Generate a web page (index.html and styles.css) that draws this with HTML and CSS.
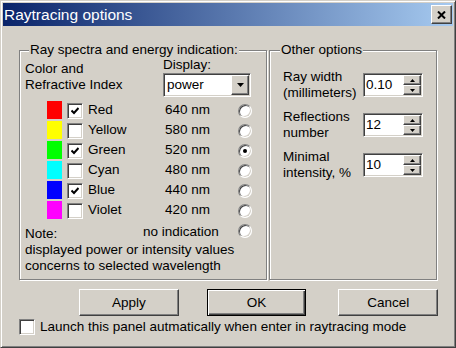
FILE: index.html
```html
<!DOCTYPE html>
<html lang="en">

<head>
    <meta charset="UTF-8">
    <title>Raytracing options</title>
    <link rel="stylesheet" href="styles.css">
</head>

<body>
    <div class="window">
        <div class="titlebar">
            <span class="title">Raytracing options</span>
            <button class="close raised">
                <svg width="9" height="8" viewBox="0 0 9 8"><path d="M1 0.5 L8 7.5 M8 0.5 L1 7.5" stroke="#000" stroke-width="2" fill="none"/></svg>
            </button>
        </div>

        <div class="content">
            <div class="groups">
                <!-- Spectra group -->
                <div class="group spectra">
                    <span class="legend">Ray spectra and energy indication:</span>
                    <div class="head">
                        <div class="head-label">Color and<br>Refractive Index</div>
                        <div class="display">
                            <div>Display:</div>
                            <div class="combo sunken">
                                <span class="combo-value">power</span>
                                <span class="combo-btn raised">
                                    <svg width="7" height="4" viewBox="0 0 7 4"><path d="M0 0 H7 L3.5 4 Z" fill="#000"/></svg>
                                </span>
                            </div>
                        </div>
                    </div>

                    <div class="rows">
                        <div class="row">
                            <span class="swatch red"></span>
                            <span class="check sunken"><svg width="8" height="8" viewBox="0 0 8 8"><path d="M0.5 3.5 L3 6 L7.5 1" stroke="#000" stroke-width="2" fill="none"/></svg></span>
                            <span class="name">Red</span>
                            <span class="wl">640 nm</span>
                            <span class="radio"></span>
                        </div>
                        <div class="row">
                            <span class="swatch yellow"></span>
                            <span class="check sunken"></span>
                            <span class="name">Yellow</span>
                            <span class="wl">580 nm</span>
                            <span class="radio"></span>
                        </div>
                        <div class="row">
                            <span class="swatch green"></span>
                            <span class="check sunken"><svg width="8" height="8" viewBox="0 0 8 8"><path d="M0.5 3.5 L3 6 L7.5 1" stroke="#000" stroke-width="2" fill="none"/></svg></span>
                            <span class="name">Green</span>
                            <span class="wl">520 nm</span>
                            <span class="radio selected"></span>
                        </div>
                        <div class="row">
                            <span class="swatch cyan"></span>
                            <span class="check sunken"></span>
                            <span class="name">Cyan</span>
                            <span class="wl">480 nm</span>
                            <span class="radio"></span>
                        </div>
                        <div class="row">
                            <span class="swatch blue"></span>
                            <span class="check sunken"><svg width="8" height="8" viewBox="0 0 8 8"><path d="M0.5 3.5 L3 6 L7.5 1" stroke="#000" stroke-width="2" fill="none"/></svg></span>
                            <span class="name">Blue</span>
                            <span class="wl">440 nm</span>
                            <span class="radio"></span>
                        </div>
                        <div class="row">
                            <span class="swatch violet"></span>
                            <span class="check sunken"></span>
                            <span class="name">Violet</span>
                            <span class="wl">420 nm</span>
                            <span class="radio"></span>
                        </div>
                        <div class="row last">
                            <span class="note-label">Note:</span>
                            <span class="none">no indication</span>
                            <span class="radio"></span>
                        </div>
                    </div>
                    <p class="note">displayed power or intensity values<br>concerns to selected wavelength</p>
                </div>

                <!-- Other options group -->
                <div class="group other">
                    <span class="legend">Other options</span>
                    <div class="field">
                        <div class="field-label">Ray width<br>(millimeters)</div>
                        <div class="spin sunken">
                            <span class="spin-value">0.10</span>
                            <span class="spin-btns">
                                <span class="spin-btn raised"><svg width="5" height="3" viewBox="0 0 5 3"><path d="M0 3 H5 L2.5 0 Z" fill="#000"/></svg></span>
                                <span class="spin-btn raised"><svg width="5" height="3" viewBox="0 0 5 3"><path d="M0 0 H5 L2.5 3 Z" fill="#000"/></svg></span>
                            </span>
                        </div>
                    </div>
                    <div class="field">
                        <div class="field-label">Reflections<br>number</div>
                        <div class="spin sunken">
                            <span class="spin-value">12</span>
                            <span class="spin-btns">
                                <span class="spin-btn raised"><svg width="5" height="3" viewBox="0 0 5 3"><path d="M0 3 H5 L2.5 0 Z" fill="#000"/></svg></span>
                                <span class="spin-btn raised"><svg width="5" height="3" viewBox="0 0 5 3"><path d="M0 0 H5 L2.5 3 Z" fill="#000"/></svg></span>
                            </span>
                        </div>
                    </div>
                    <div class="field">
                        <div class="field-label">Minimal<br>intensity, %</div>
                        <div class="spin sunken">
                            <span class="spin-value">10</span>
                            <span class="spin-btns">
                                <span class="spin-btn raised"><svg width="5" height="3" viewBox="0 0 5 3"><path d="M0 3 H5 L2.5 0 Z" fill="#000"/></svg></span>
                                <span class="spin-btn raised"><svg width="5" height="3" viewBox="0 0 5 3"><path d="M0 0 H5 L2.5 3 Z" fill="#000"/></svg></span>
                            </span>
                        </div>
                    </div>
                </div>
            </div>

            <div class="buttons">
                <button class="btn raised apply">Apply</button>
                <button class="btn default ok">OK</button>
                <button class="btn raised cancel">Cancel</button>
            </div>

            <label class="launch">
                <span class="check sunken"></span>
                Launch this panel autmatically when enter in raytracing mode
            </label>
        </div>
    </div>
</body>

</html>
```

FILE: styles.css
```css
* {
    margin: 0;
    padding: 0;
    box-sizing: border-box;
}

body {
    font-family: 'Liberation Sans', Arial, sans-serif;
    font-size: 13.5px;
    line-height: 16px;
    color: #000;
    background-color: #d4d0c8;
}

button {
    font: inherit;
    color: inherit;
    cursor: pointer;
}

/* 3d borders */
.raised {
    background-color: #d4d0c8;
    border: 1px solid;
    border-color: #ffffff #404040 #404040 #ffffff;
    box-shadow: inset -1px -1px 0 #808080, inset 1px 1px 0 #d4d0c8;
}

.sunken {
    background-color: #ffffff;
    border: 1px solid;
    border-color: #808080 #ffffff #ffffff #808080;
    box-shadow: inset 1px 1px 0 #404040, inset -1px -1px 0 #d4d0c8;
}

.window {
    width: 456px;
    height: 348px;
    background-color: #d4d0c8;
    border: 1px solid;
    border-color: #d4d0c8 #404040 #404040 #d4d0c8;
    box-shadow: inset 1px 1px 0 #ffffff, inset -1px -1px 0 #808080;
    padding: 2px;
    display: flex;
    flex-direction: column;
}

.titlebar {
    height: 23px;
    background: linear-gradient(to right, #0a246a, #a6caf0);
    display: flex;
    align-items: center;
    justify-content: space-between;
    padding: 0 1px 0 1px;
}

.title {
    color: #ffffff;
    font-size: 15.5px;
}

.close {
    width: 21px;
    height: 19px;
    display: flex;
    align-items: center;
    justify-content: center;
}

.content {
    padding: 24px 15px 0 16px;
}

.groups {
    display: grid;
    grid-template-columns: 248px 168px;
    column-gap: 2px;
    height: 230px;
}

.group {
    position: relative;
    border: 1px solid #808080;
    box-shadow: inset 1px 1px 0 #ffffff, 1px 1px 0 #ffffff;
}

.legend {
    position: absolute;
    top: -9px;
    left: 9px;
    padding: 0 1px;
    background-color: #d4d0c8;
    white-space: nowrap;
}

/* spectra group */
.spectra {
    padding: 6px 0 0 5px;
}

.head {
    display: flex;
}

.head-label {
    width: 138px;
    margin-top: 4px;
}

.combo {
    width: 88px;
    height: 24px;
    padding: 1px;
    display: flex;
    align-items: center;
}

.combo-value {
    flex: 1;
    padding-left: 2px;
}

.combo-btn {
    width: 18px;
    height: 20px;
    display: flex;
    align-items: center;
    justify-content: center;
}

.rows {
    margin-top: 4px;
}

.row {
    display: flex;
    align-items: flex-start;
    height: 20px;
}

.swatch {
    width: 15px;
    height: 18px;
    margin-left: 22px;
}

.red { background-color: #ff0000; }
.yellow { background-color: #ffff00; }
.green { background-color: #00ff00; }
.cyan { background-color: #00ffff; }
.blue { background-color: #0000ff; }
.violet { background-color: #ff00ff; }

.check {
    width: 16px;
    height: 16px;
    display: flex;
    align-items: center;
    justify-content: center;
}

.row .check {
    margin: 2px 0 0 5px;
}

.name {
    width: 77px;
    margin: 1px 0 0 5px;
}

.wl {
    width: 73px;
    margin-top: 1px;
}

.radio {
    width: 14px;
    height: 14px;
    margin-top: 3px;
    border-radius: 50%;
    background-color: #ffffff;
    border: 1px solid;
    border-color: #808080 #ffffff #ffffff #808080;
    box-shadow: inset 1px 1px 0 #404040, inset -1px -1px 0 #d4d0c8;
    display: flex;
    align-items: center;
    justify-content: center;
}

.radio.selected::after {
    content: '';
    width: 4px;
    height: 4px;
    border-radius: 50%;
    background-color: #000;
}

.row.last {
    height: 21px;
}

.note-label {
    width: 118px;
    margin-top: 5px;
}

.none {
    width: 95px;
    margin-top: 3px;
}

/* other options group */
.other {
    padding: 18px 0 0 13px;
}

.other .legend {
    left: 10px;
}

.field {
    display: flex;
    height: 40px;
}

.field-label {
    width: 80px;
}

.spin {
    width: 60px;
    height: 24px;
    margin-top: 4px;
    padding: 1px;
    display: flex;
}

.spin-value {
    flex: 1;
    padding-left: 1px;
    line-height: 20px;
}

.spin-btns {
    display: flex;
    flex-direction: column;
}

.spin-btn {
    width: 18px;
    height: 10px;
    display: flex;
    align-items: center;
    justify-content: center;
}

/* bottom buttons */
.buttons {
    display: flex;
    margin-top: 9px;
}

.btn {
    width: 100px;
    height: 27px;
}

.apply {
    margin-left: 60px;
}

.ok {
    margin-left: 28px;
    background-color: #d4d0c8;
    border: 1px solid #000;
    box-shadow: inset 1px 1px 0 #ffffff, inset -1px -1px 0 #404040, inset -2px -2px 0 #808080;
}

.cancel {
    margin-left: 32px;
}

.launch {
    display: flex;
    align-items: center;
    gap: 5px;
    margin-top: 3px;
}
```
